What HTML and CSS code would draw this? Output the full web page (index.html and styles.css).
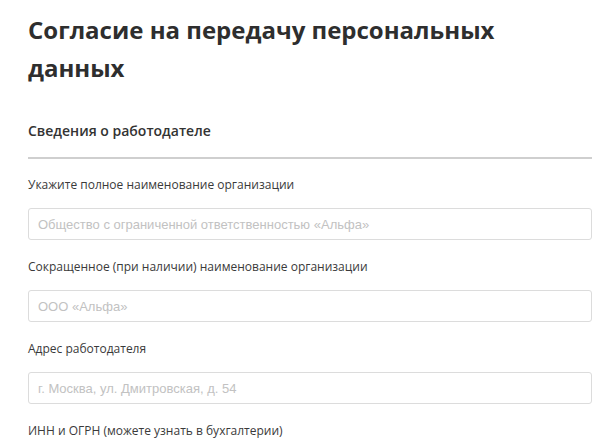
FILE: index.html
```html
<!DOCTYPE html>
<html lang="ru">
<head>
<meta charset="utf-8">
<title>Согласие на передачу персональных данных</title>
<link rel="stylesheet" href="styles.css">
</head>
<body>
<main class="page">
  <h1 class="title">Согласие на передачу персональных данных</h1>
  <h2 class="section">Сведения о работодателе</h2>
  <form class="form">
    <div class="field">
      <label class="label">Укажите полное наименование организации</label>
      <input class="input" type="text" placeholder="Общество с ограниченной ответственностью «Альфа»">
    </div>
    <div class="field">
      <label class="label">Сокращенное (при наличии) наименование организации</label>
      <input class="input" type="text" placeholder="ООО «Альфа»">
    </div>
    <div class="field">
      <label class="label">Адрес работодателя</label>
      <input class="input" type="text" placeholder="г. Москва, ул. Дмитровская, д. 54">
    </div>
    <div class="field">
      <label class="label">ИНН и ОГРН (можете узнать в бухгалтерии)</label>
    </div>
  </form>
</main>
</body>
</html>
```

FILE: styles.css
```css
html, body {
  margin: 0;
  padding: 0;
  background: #ffffff;
}

.page {
  padding: 11px 6px 0 28px;
  font-family: "Open Sans", "Liberation Sans", sans-serif;
  color: #333333;
}

.title {
  margin: 0;
  max-width: 500px;
  font-size: 24px;
  line-height: 38px;
  font-weight: 700;
  color: #2e2e2e;
}

.section {
  margin: 34px 0 0;
  padding-bottom: 16px;
  border-bottom: 2px solid #cfcfcf;
  font-size: 14px;
  line-height: 20px;
  font-weight: 600;
  color: #333333;
}

.form {
  display: flex;
  flex-direction: column;
  padding-top: 18px;
}

.field {
  display: flex;
  flex-direction: column;
  gap: 15px;
  padding-bottom: 19px;
}

.label {
  font-size: 12px;
  line-height: 16px;
  color: #3a3a3a;
}

.input {
  box-sizing: border-box;
  height: 32px;
  margin: 0;
  padding: 0 9px;
  border: 1px solid #dcdcdc;
  border-radius: 3px;
  font-family: "Liberation Sans", Arial, sans-serif;
  font-size: 13px;
  color: #333333;
  background: #ffffff;
  outline: none;
}

.input::placeholder {
  color: #c2c2c2;
}
```
